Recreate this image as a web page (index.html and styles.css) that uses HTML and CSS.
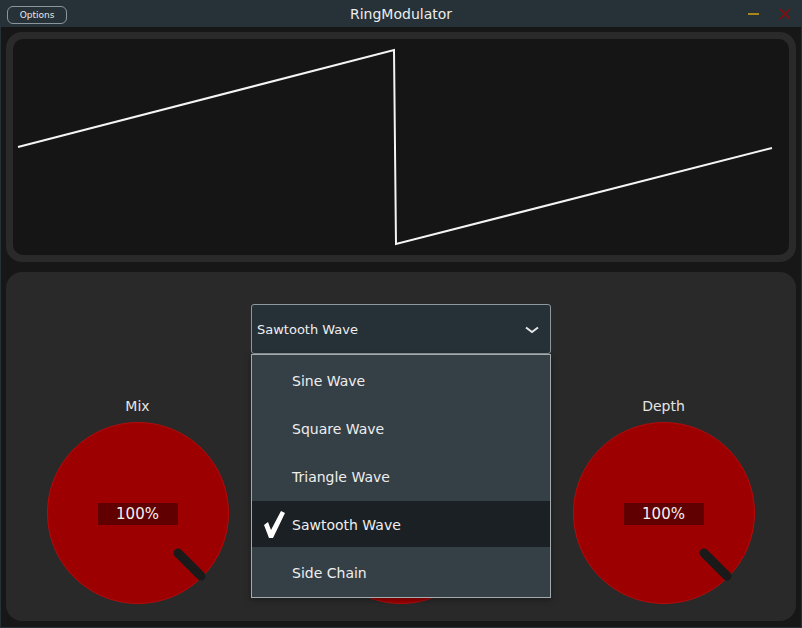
FILE: index.html
```html
<!DOCTYPE html>
<html>
<head>
<meta charset="utf-8">
<link rel="stylesheet" href="styles.css">
</head>
<body>
<div class="window">
  <header class="titlebar">
    <button class="options">Options</button>
    <div class="title">RingModulator</div>
    <div class="winbtns">
      <span class="minimize"></span>
      <svg class="close" width="12" height="12" viewBox="0 0 12 12"><path d="M1 1L11 11M11 1L1 11" stroke="#8e0b0b" stroke-width="1.5" fill="none"/></svg>
    </div>
  </header>
  <main class="content">
    <section class="scope">
      <div class="scope-inner">
        <svg class="wave" width="776" height="216" viewBox="0 0 776 216">
          <polyline points="5,108 381,11 383,205 759,109" fill="none" stroke="#f4f4f4" stroke-width="2" stroke-linejoin="miter"/>
        </svg>
      </div>
    </section>
    <section class="controls">
      <div class="combo-wrap">
        <div class="combo">
          <span>Sawtooth Wave</span>
          <svg width="14" height="8" viewBox="0 0 14 8"><polyline points="1,1.5 7,6 13,1.5" fill="none" stroke="#e6e6e6" stroke-width="2"/></svg>
        </div>
        <ul class="menu">
          <li>Sine Wave</li>
          <li>Square Wave</li>
          <li>Triangle Wave</li>
          <li class="selected"><svg class="tick" width="22" height="28" viewBox="0 0 22 28"><polygon points="0,14 4,11 7,19 17,0 21,2 9,27 5,27" fill="#ffffff"/></svg>Sawtooth Wave</li>
          <li>Side Chain</li>
        </ul>
      </div>
      <div class="knobs">
        <div class="knob-col">
          <div class="knob-label">Mix</div>
          <div class="knob">
            <div class="value">100%</div>
            <svg class="pointer" width="182" height="182" viewBox="0 0 182 182"><line x1="131" y1="131" x2="154" y2="154" stroke="#1a1a1a" stroke-width="9" stroke-linecap="round"/></svg>
          </div>
        </div>
        <div class="knob-col">
          <div class="knob-label"></div>
          <div class="knob">
            <div class="value"></div>
            <svg class="pointer" width="182" height="182" viewBox="0 0 182 182"><line x1="131" y1="131" x2="154" y2="154" stroke="#1a1a1a" stroke-width="9" stroke-linecap="round"/></svg>
          </div>
        </div>
        <div class="knob-col">
          <div class="knob-label">Depth</div>
          <div class="knob">
            <div class="value">100%</div>
            <svg class="pointer" width="182" height="182" viewBox="0 0 182 182"><line x1="131" y1="131" x2="154" y2="154" stroke="#1a1a1a" stroke-width="9" stroke-linecap="round"/></svg>
          </div>
        </div>
      </div>
    </section>
  </main>
</div>
</body>
</html>
```
FILE: styles.css
```css
* { box-sizing: border-box; }
html, body { margin: 0; padding: 0; }
body {
  width: 802px;
  height: 628px;
  overflow: hidden;
  font-family: "DejaVu Sans", Verdana, sans-serif;
  background: #171717;
}
.window {
  width: 802px;
  height: 628px;
  display: flex;
  flex-direction: column;
  background: #171717;
  border: 1px solid #263238;
  border-top: 0;
}
.titlebar {
  height: 27px;
  flex: none;
  background: #263238;
  display: flex;
  align-items: center;
  position: relative;
  padding: 0 0 0 7px;
  margin: 0 -1px;
}
.options {
  width: 60px;
  height: 18px;
  margin-top: 3px;
  border: 1px solid #8a969c;
  border-radius: 6px;
  background: #263238;
  color: #e8e8e8;
  font-family: "DejaVu Sans", sans-serif;
  font-size: 9px;
  padding: 0;
  line-height: 16px;
}
.title {
  position: absolute;
  left: 0; right: 0; top: 0;
  text-align: center;
  line-height: 29px;
  font-size: 14px;
  color: #ececec;
  pointer-events: none;
}
.winbtns {
  margin-left: auto;
  display: flex;
  align-items: center;
  gap: 20px;
  padding-right: 11px;
  height: 27px;
}
.minimize {
  width: 11px;
  height: 2px;
  background: #a7861c;
  margin-top: 1px;
}
.close { display: block; margin-top: 1px; }

.content {
  flex: 1;
  display: flex;
  flex-direction: column;
  gap: 10px;
  padding: 5px 5px 6px 5px;
}
.scope {
  height: 230px;
  flex: none;
  background: #2a2a2a;
  border-radius: 16px;
  padding: 7px;
}
.scope-inner {
  height: 100%;
  background: #151515;
  border-radius: 10px;
  overflow: hidden;
}
.wave { display: block; }

.controls {
  flex: 1;
  background: #292929;
  border-radius: 16px;
  padding-top: 32px;
  display: flex;
  flex-direction: column;
  position: relative;
}
.combo-wrap {
  position: relative;
  width: 300px;
  margin-left: 245px;
  z-index: 2;
}
.combo {
  height: 50px;
  background: #253037;
  border: 1px solid #8d979c;
  border-radius: 3px;
  display: flex;
  align-items: center;
  justify-content: space-between;
  padding: 0 11px 0 5px;
  color: #eeeeee;
  font-size: 13px;
}
.combo svg { display: block; margin-top: 1px; }
.menu {
  position: absolute;
  left: 0;
  top: 50px;
  width: 300px;
  margin: 0;
  padding: 2px 0 0 0;
  list-style: none;
  background: #353f46;
  border: 1px solid #a3abaf;
  box-shadow: 0 2px 6px rgba(0,0,0,0.35);
}
.menu li {
  height: 48px;
  display: flex;
  align-items: center;
  padding-left: 40px;
  color: #eeeeee;
  font-size: 14px;
  position: relative;
}
.menu li.selected {
  background: linear-gradient(#1b2024, #1b2024) top left / 100% 46px no-repeat;
}
.tick {
  position: absolute;
  left: 12px;
  top: 10px;
}

.knobs {
  display: grid;
  grid-template-columns: repeat(3, 263px);
  margin-top: 43px;
}
.knob-col {
  display: flex;
  flex-direction: column;
  align-items: center;
}
.knob-label {
  height: 18px;
  line-height: 18px;
  font-size: 14px;
  color: #e4e4e4;
  margin-bottom: 7px;
}
.knob {
  width: 182px;
  height: 182px;
  border-radius: 50%;
  background: #9c0000;
  border: 1px solid #b80a0a;
  display: flex;
  align-items: center;
  justify-content: center;
  position: relative;
}
.value {
  width: 80px;
  height: 22px;
  margin-top: 2px;
  background: #600000;
  color: #f0f0f0;
  font-size: 15px;
  line-height: 22px;
  text-align: center;
}
.pointer {
  position: absolute;
  left: -1px;
  top: -1px;
}
```
